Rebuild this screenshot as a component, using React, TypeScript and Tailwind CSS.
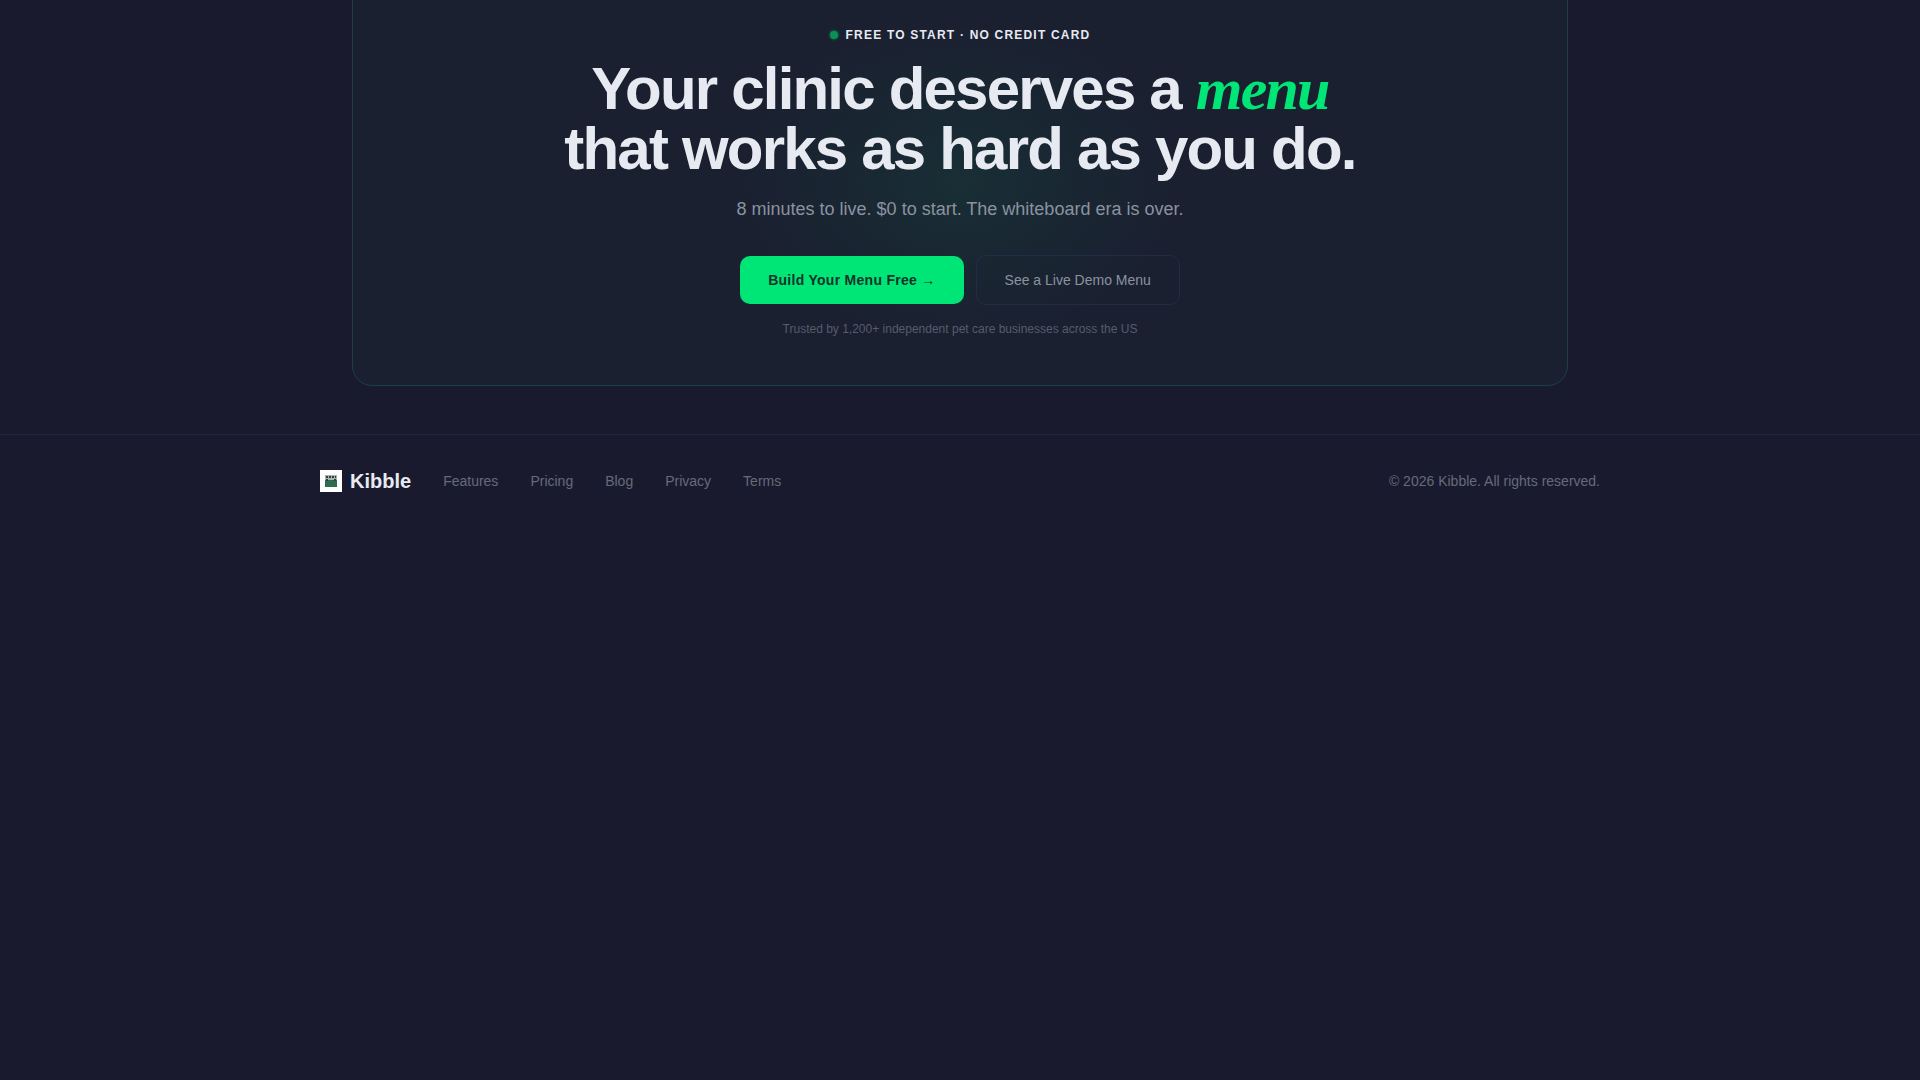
const FOOTER_LINKS = ['Features', 'Pricing', 'Blog', 'Privacy', 'Terms']

function LogoMark() {
  return (
    <div className="flex h-[22px] w-[22px] shrink-0 items-center justify-center bg-white">
      <svg width="12" height="12" viewBox="0 0 12 12">
        <rect width="12" height="12" fill="#a8b4ae" />
        <path d="M1 1h2v2H1zM4 1h2v2H4zM7 1h2v2H7zM10 1h1v2h-1z" fill="#34423c" />
        <rect x="0" y="5" width="12" height="7" fill="#2f6b4f" />
        <path d="M1 4h2v2H1zM9 4h2v2H9z" fill="#34423c" />
      </svg>
    </div>
  )
}

export default function App() {
  return (
    <div className="min-h-[1080px] overflow-hidden bg-[#1a1a2e] font-['Liberation_Sans',Arial,sans-serif]">
      <div className="mx-auto w-[1280px] px-8">
        <section className="relative -mt-[40px] overflow-hidden rounded-[20px] border border-[#1c3f45] bg-[#1a2030] pt-[65px] pb-[47px] text-center">
          <div className="absolute left-1/2 top-[60px] h-[320px] w-[440px] -translate-x-1/2 bg-[radial-gradient(ellipse_at_center,rgba(0,230,118,0.07),transparent_70%)]" />
          <div className="relative">
            <div className="flex items-center justify-center gap-[8px] text-[12px] leading-[18px] font-bold tracking-[0.1em] text-[#e8eaf2]">
              <span className="h-[8px] w-[8px] rounded-full bg-[#0a8f55] shadow-[0_0_3px_#0a8f55]" />
              FREE TO START · NO CREDIT CARD
            </div>
            <h2 className="mt-[15px] text-[60px] leading-[60px] font-bold tracking-[-0.03em] text-[#e8eaf2]">
              Your clinic deserves a{' '}
              <em className="font-['Liberation_Serif',serif] text-[#00e676] italic">menu</em>
              <br />
              that works as hard as you do.
            </h2>
            <p className="mt-[16px] text-[18px] leading-[28px] text-[#8b92a0]">
              8 minutes to live. $0 to start. The whiteboard era is over.
            </p>
            <div className="mt-[32px] flex items-center justify-center gap-[12px]">
              <a className="flex h-[48px] items-center rounded-[10px] bg-[#00e676] px-[28px] text-[14px] font-bold tracking-[0.02em] text-[#12332c]">
                Build Your Menu Free →
              </a>
              <a className="flex h-[50px] items-center rounded-[10px] border border-[#262b45] px-[28px] text-[14px] text-[#8b92a0]">
                See a Live Demo Menu
              </a>
            </div>
            <p className="mt-[15px] text-[12px] leading-[18px] text-[#565c6c]">
              Trusted by 1,200+ independent pet care businesses across the US
            </p>
          </div>
        </section>
      </div>
      <footer className="mt-[48px] border-t border-[#24243a] py-[32px]">
        <div className="mx-auto flex w-[1280px] items-center justify-between">
          <div className="flex items-center gap-[32px]">
            <div className="flex items-center gap-[8px]">
              <LogoMark />
              <span className="text-[20px] leading-[28px] font-bold text-[#e8eaf2]">Kibble</span>
            </div>
            {FOOTER_LINKS.map(link => (
              <a key={link} className="text-[14px] text-[#666a7a]">{link}</a>
            ))}
          </div>
          <span className="text-[14px] text-[#666a7a]">© 2026 Kibble. All rights reserved.</span>
        </div>
      </footer>
    </div>
  )
}
